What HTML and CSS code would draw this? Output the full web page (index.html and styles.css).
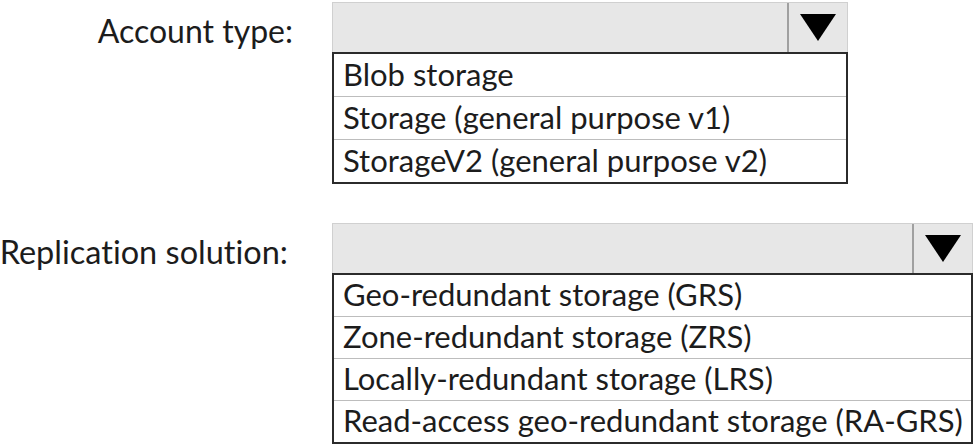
FILE: index.html
```html
<!DOCTYPE html>
<html lang="en">
<head>
    <meta charset="UTF-8">
    <title>Storage account</title>
    <link rel="stylesheet" href="styles.css">
</head>
<body>
    <div class="form">
        <!-- Account type -->
        <div class="label">Account type:</div>
        <div class="field field-short">
            <div class="select">
                <span class="select-value"></span>
                <span class="select-arrow">
                    <svg width="36" height="27" viewBox="0 0 36 27"><polygon points="0,0 36,0 18,27" fill="#000"/></svg>
                </span>
            </div>
            <ul class="options">
                <li>Blob storage</li>
                <li>Storage (general purpose v1)</li>
                <li>StorageV2 (general purpose v2)</li>
            </ul>
        </div>

        <!-- Replication -->
        <div class="label label-wide">Replication solution:</div>
        <div class="field field-long">
            <div class="select">
                <span class="select-value"></span>
                <span class="select-arrow">
                    <svg width="36" height="27" viewBox="0 0 36 27"><polygon points="0,0 36,0 18,27" fill="#000"/></svg>
                </span>
            </div>
            <ul class="options options-tight">
                <li>Geo-redundant storage (GRS)</li>
                <li>Zone-redundant storage (ZRS)</li>
                <li>Locally-redundant storage (LRS)</li>
                <li>Read-access geo-redundant storage (RA-GRS)</li>
            </ul>
        </div>
    </div>
</body>
</html>
```

FILE: styles.css
```css
body {
    margin: 0;
    background: #fff;
    font-family: Lato, "Open Sans", sans-serif;
    font-size: 31px;
    font-variant-ligatures: none;
    color: #1c1c1c;
}

.form {
    display: grid;
    grid-template-columns: 293px auto;
    column-gap: 39px;
    row-gap: 39px;
    padding-top: 2px;
    align-items: start;
}

.label {
    height: 50px;
    display: flex;
    align-items: center;
    justify-content: flex-end;
    padding-top: 6px;
    box-sizing: border-box;
    font-size: 32px;
    white-space: nowrap;
}

.label-wide {
    padding-right: 5px;
    font-size: 32.5px;
}

.field-short {
    width: 516px;
}

.field-long {
    width: 641px;
}

.select {
    display: flex;
    height: 50px;
    box-sizing: border-box;
    border: 1px solid #d0d0d0;
    border-bottom: none;
    background: #e7e7e7;
}

.select-value {
    flex: 1;
}

.select-arrow {
    width: 58px;
    border-left: 2px solid #a0a0a0;
    display: flex;
    align-items: center;
    justify-content: center;
}

.options {
    list-style: none;
    margin: 0;
    padding: 0;
    border: 2px solid #2b2b2b;
}

.options li {
    height: 42px;
    line-height: 40px;
    padding-left: 9px;
    border-top: 1px solid #bdbdbd;
    white-space: nowrap;
}

.options li:first-child {
    border-top: none;
}

.options-tight li {
    height: 41px;
    line-height: 39px;
}
```
